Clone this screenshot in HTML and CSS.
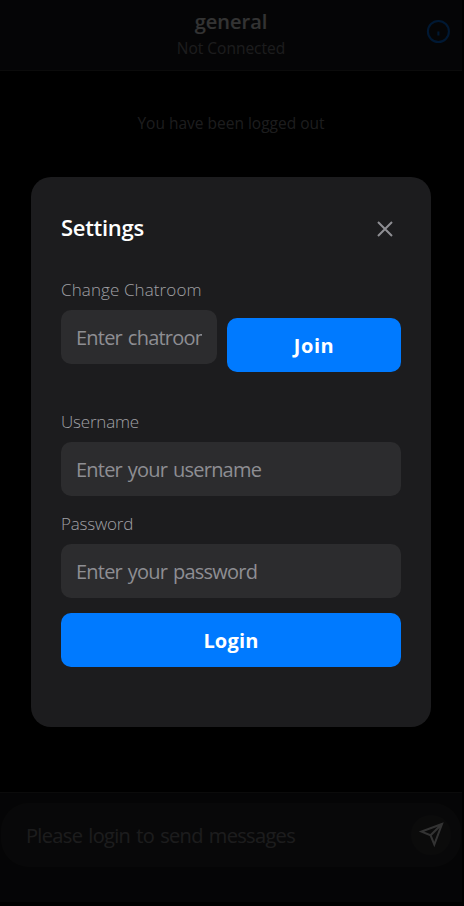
FILE: index.html
```html
<!DOCTYPE html>
<html lang="en">
<head>
<meta charset="utf-8">
<title>Chat</title>
<link rel="stylesheet" href="styles.css">
</head>
<body>
<div class="app">
  <header class="header">
    <span class="header-spacer"></span>
    <div class="header-text">
      <h1 class="room">general</h1>
      <p class="status">Not Connected</p>
    </div>
    <button class="info" aria-label="Settings">
      <svg width="24" height="24" viewBox="0 0 24 24" fill="none" stroke="currentColor" stroke-width="2"><circle cx="12.400" cy="12.500" r="10.500"/><path d="M12.400 12.500v4"/></svg>
    </button>
  </header>
  <main class="messages"><p class="notice">You have been logged out</p></main>
  <footer class="footer">
    <div class="composer">
      <input class="composer-input" type="text" placeholder="Please login to send messages" disabled>
      <button class="send" aria-label="Send">
        <svg width="26" height="26" viewBox="0 0 26 26" fill="none" stroke="currentColor" stroke-width="2"><path d="M24 2 3.500 9.600 12.600 13.300 16.300 22.500zM24 2 12.600 13.300"/></svg>
      </button>
    </div>
  </footer>
</div>
<div class="overlay">
  <section class="modal">
    <div class="modal-head">
      <h2 class="modal-title">Settings</h2>
      <button class="close" aria-label="Close"><svg width="16" height="16" viewBox="0 0 16 16" stroke="currentColor" stroke-width="2"><path d="M1 1 15 15M15 1 1 15"/></svg></button>
    </div>
    <div class="join-row">
      <div class="field">
        <label class="label label-room" for="room">Change Chatroom</label>
        <input class="input" id="room" type="text" placeholder="Enter chatroom name">
      </div>
      <button class="button join">Join</button>
    </div>
    <div class="field">
      <label class="label" for="user">Username</label>
      <input class="input" id="user" type="text" placeholder="Enter your username">
    </div>
    <div class="field">
      <label class="label" for="pass">Password</label>
      <input class="input" id="pass" type="password" placeholder="Enter your password">
    </div>
    <button class="button login">Login</button>
  </section>
</div>
</body>
</html>
```
FILE: styles.css
```css
* { box-sizing: border-box; margin: 0; padding: 0; }
html, body { height: 100%; }
body { background: #000; color: #fff; font-family: "Open Sans", "Noto Sans", sans-serif; overflow: hidden; }
button, input { font: inherit; border: 0; outline: 0; background: none; }
svg { display: block; }

.app { display: flex; flex-direction: column; width: 462px; height: 902px; }
.header { display: flex; align-items: flex-start; justify-content: space-between; height: 71px; padding: 8px 12px 0; background: #1c1c1e; border-bottom: 1px solid #38383a; }
.header-spacer { width: 24px; }
.header-text { text-align: center; }
.room { font-size: 20px; line-height: 28px; font-weight: 600; }
.status { font-size: 15.5px; line-height: 24px; color: #8e8e93; }
.info { margin-top: 11px; color: #007aff; }
.messages { flex: 1; padding-top: 40px; text-align: center; }
.notice { font-size: 15.5px; line-height: 24px; color: #8e8e93; }
.footer { height: 110px; padding: 10px 1px; background: #1c1c1e; border-top: 1px solid #38383a; }
.composer { display: flex; align-items: center; height: 64px; padding: 0 10px 0 25px; border-radius: 28px; background: #2c2c2e; }
.composer-input { flex: 1; min-width: 0; font-size: 20px; letter-spacing: -.66px; word-spacing: 1.5px; }
.send { display: flex; align-items: center; justify-content: center; width: 40px; height: 40px; border-radius: 50%; background: #38383a; color: #fff; }

.overlay { position: fixed; inset: 0; display: flex; justify-content: center; align-items: flex-start; padding: 177px 2px 0 0; background: rgba(0, 0, 0, .8); }
.modal { width: 400px; height: 550px; padding: 30px; border-radius: 20px; background: #1c1c1e; }
.modal-head { display: flex; align-items: center; justify-content: space-between; height: 44px; padding-right: 8px; }
.modal-title { padding-bottom: 5px; font-size: 22px; line-height: 30px; font-weight: 600; letter-spacing: -.3px; }
.close { color: #8e8e93; }
.join-row { display: flex; align-items: flex-end; gap: 10px; margin: 26px 0 37px; }
.join-row .field { width: 156px; margin: 0 0 8px; }
.join { width: 174px; letter-spacing: .6px; }
.field { margin-bottom: 15px; }
.label { display: block; height: 33px; font-size: 17px; line-height: 26px; font-weight: 300; letter-spacing: -.2px; color: #a0a0a5; white-space: nowrap; }
.label-room { letter-spacing: .1px; }
.input { display: block; width: 100%; height: 54px; padding: 0 15px; border-radius: 10px; background: #2c2c2e; font-size: 20px; letter-spacing: -.79px; word-spacing: 1.5px; }
input::placeholder { color: #8e8e93; opacity: 1; }
.button { display: block; height: 54px; border-radius: 10px; background: #007aff; color: #fff; font-size: 20px; font-weight: 700; }
.login { width: 100%; letter-spacing: .2px; }
```
